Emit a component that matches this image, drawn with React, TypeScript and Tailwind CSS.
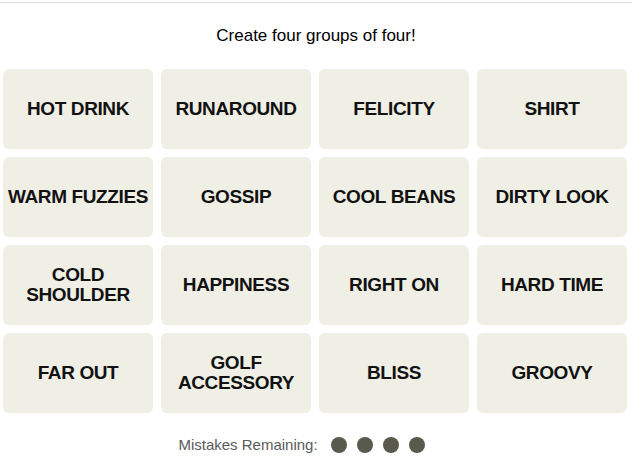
import React from 'react';

const words = [
  'HOT DRINK', 'RUNAROUND', 'FELICITY', 'SHIRT',
  'WARM FUZZIES', 'GOSSIP', 'COOL BEANS', 'DIRTY LOOK',
  'COLD SHOULDER', 'HAPPINESS', 'RIGHT ON', 'HARD TIME',
  'FAR OUT', 'GOLF ACCESSORY', 'BLISS', 'GROOVY',
];

const font = { fontFamily: '"Liberation Sans", Arial, sans-serif' };

export default function App() {
  return (
    <div className="w-[632px] h-[459px] bg-white overflow-hidden" style={font}>
      <div className="h-[2px]" />
      <div className="border-t border-[#dcdcdc]" />

      <p className="py-[21px] text-center text-[17px] leading-[24px] text-black">
        Create four groups of four!
      </p>

      <div className="pl-[3px]">
        <div className="grid w-[624px] grid-cols-4 gap-2">
          {words.map((word) => (
            <button
              key={word}
              className="flex h-20 items-center justify-center rounded-md bg-[#efefe6] px-1 text-center text-[19px] font-bold leading-[20px] tracking-[-0.02em] text-[#121212]"
            >
              {word}
            </button>
          ))}
        </div>
      </div>

      <div className="mt-6 flex h-4 items-center justify-center pr-[29px]">
        <span className="text-[15px] text-[#5a5a5a]">Mistakes Remaining:</span>
        <div className="ml-[13px] flex gap-[10px]">
          {[0, 1, 2, 3].map((i) => (
            <span key={i} className="h-4 w-4 rounded-full bg-[#5a594e]" />
          ))}
        </div>
      </div>
    </div>
  );
}
